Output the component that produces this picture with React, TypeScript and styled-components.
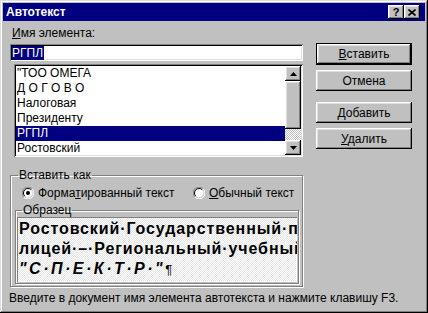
import * as React from 'react'
import styled, { createGlobalStyle } from 'styled-components'

const GlobalStyle = createGlobalStyle`
  html, body {
    margin: 0;
    padding: 0;
    background: #c0c0c0;
  }
  body {
    font-family: "Liberation Sans", Arial, sans-serif;
  }
`

const raised = `inset -1px -1px #000, inset 1px 1px #fff, inset -2px -2px #808080, inset 2px 2px #dfdfdf`
const sunken = `inset 1px 1px #808080, inset -1px -1px #fff, inset 2px 2px #000, inset -2px -2px #dfdfdf`
const dither = `repeating-conic-gradient(#fff 0 25%, #c0c0c0 0 50%) 0 0 / 2px 2px`

const Window = styled.div`
  width: 428px;
  height: 313px;
  box-sizing: border-box;
  padding: 3px;
  background: #c0c0c0;
  box-shadow: inset -1px -1px #000, inset 1px 1px #dfdfdf, inset -2px -2px #808080, inset 2px 2px #fff;
  display: flex;
  flex-direction: column;
  font-size: 12px;
  color: #000;
`

const TitleBar = styled.div`
  height: 18px;
  background: #000080;
  display: flex;
  align-items: center;
  padding: 0 5px 0 3px;
`

const TitleText = styled.div`
  flex: 1;
  color: #fff;
  font-weight: bold;
  font-size: 12px;
`

const TitleButton = styled.div`
  width: 16px;
  height: 14px;
  background: #c0c0c0;
  box-shadow: ${raised};
  display: grid;
  place-items: center;
  font-weight: bold;
  font-size: 11px;
  line-height: 14px;
`

const Main = styled.div`
  display: grid;
  grid-template-columns: 293px 96px;
  column-gap: 13px;
  padding-left: 7px;
`

const LeftCol = styled.div`
  display: flex;
  flex-direction: column;
`

const Label = styled.div`
  margin: 5px 0 4px 2px;
  line-height: 14px;
`

const Key = styled.span`
  text-decoration: underline;
`

const NameField = styled.div`
  height: 17px;
  box-sizing: border-box;
  background: #fff;
  box-shadow: ${sunken};
  padding: 2px 0 0 2px;
  line-height: 14px;
`

const Selected = styled.span`
  background: #000080;
  color: #fff;
  padding: 0 1px 0 0;
`

const List = styled.div`
  margin: 3px 0 0 4px;
  height: 93px;
  box-sizing: border-box;
  padding: 2px;
  box-shadow: ${sunken};
  background: #fff;
  display: flex;
`

const Items = styled.div`
  flex: 1;
  overflow: hidden;
`

const Row = styled.div<{ $active?: boolean }>`
  height: 15px;
  line-height: 15px;
  padding-left: 1px;
  white-space: nowrap;
  background: ${p => (p.$active ? '#000080' : 'transparent')};
  color: ${p => (p.$active ? '#fff' : '#000')};
`

const ScrollBar = styled.div`
  width: 16px;
  display: flex;
  flex-direction: column;
`

const ScrollButton = styled.div`
  height: 15px;
  background: #c0c0c0;
  box-shadow: ${raised};
  display: grid;
  place-items: center;
`

const Thumb = styled.div`
  height: 48px;
  background: #c0c0c0;
  box-shadow: ${raised};
`

const Track = styled.div`
  flex: 1;
  background: ${dither};
`

const Group = styled.fieldset`
  margin: 11px 0 0 0;
  padding: 4px 3px 2px 4px;
  min-inline-size: 0;
  border: 1px solid #808080;
  box-shadow: inset 1px 1px #fff, 1px 1px #fff;
`

const Legend = styled.legend`
  padding: 0 1px;
  margin-left: 3px;
  line-height: 14px;
`

const RadioRow = styled.div`
  display: flex;
  align-items: center;
  height: 14px;
  padding-left: 7px;
`

const RadioOption = styled.label<{ $width?: number }>`
  display: flex;
  align-items: center;
  gap: 4px;
  width: ${p => (p.$width ? `${p.$width}px` : 'auto')};
`

const SampleGroup = styled.fieldset`
  margin: 3px 0 0 0;
  padding: 0 1px 1px 1px;
  min-inline-size: 0;
  border: 1px solid #808080;
  box-shadow: inset 1px 1px #fff, 1px 1px #fff;
`

const SampleLegend = styled.legend`
  padding: 0 1px;
  margin-left: 5px;
  line-height: 14px;
`

const Preview = styled.div`
  height: 65px;
  box-sizing: border-box;
  padding: 2px 0 0 2px;
  box-shadow: inset 1px 1px #808080, inset -1px -1px #fff;
  background: repeating-conic-gradient(#e4e4e4 0 25%, #fff 0 50%) 0 0 / 2px 2px;
  overflow: hidden;
`

const PreviewLine = styled.div<{ $italic?: boolean }>`
  height: 20px;
  line-height: 20px;
  white-space: nowrap;
  font-weight: bold;
  font-size: 16px;
  letter-spacing: ${p => (p.$italic ? 2.5 : 0.9)}px;
  font-style: ${p => (p.$italic ? 'italic' : 'normal')};
`

const Pilcrow = styled.span`
  font-weight: normal;
  font-style: normal;
  font-size: 13px;
  letter-spacing: 0;
`

const RightCol = styled.div`
  display: flex;
  flex-direction: column;
  padding-top: 22px;
`

const Button = styled.div<{ $default?: boolean; $gap?: number }>`
  height: ${p => (p.$default ? 22 : 21)}px;
  box-sizing: border-box;
  margin-top: ${p => p.$gap ?? 0}px;
  background: #c0c0c0;
  border: ${p => (p.$default ? '1px solid #000' : 'none')};
  box-shadow: ${raised};
  display: flex;
  align-items: center;
  justify-content: center;
  font-size: 12px;
`

const Status = styled.div`
  margin: 5px 0 0 6px;
  line-height: 13px;
  white-space: nowrap;
`

const Radio = ({ checked }: { checked?: boolean }) => (
  <svg width="12" height="12" viewBox="0 0 12 12">
    <circle cx="6" cy="6" r="4.5" fill="#fff" />
    <path d="M1.8 10.2A5.5 5.5 0 0 1 10.2 1.8" stroke="#808080" fill="none" />
    <path d="M10.2 1.8A5.5 5.5 0 0 1 1.8 10.2" stroke="#fff" fill="none" />
    <path d="M2.8 9.2A4.5 4.5 0 0 1 9.2 2.8" stroke="#000" fill="none" />
    <path d="M9.2 2.8A4.5 4.5 0 0 1 2.8 9.2" stroke="#dfdfdf" fill="none" />
    {checked && <circle cx="6" cy="6" r="2" fill="#000" />}
  </svg>
)

const Arrow = ({ down }: { down?: boolean }) => (
  <svg width="7" height="4" viewBox="0 0 7 4">
    <path d={down ? 'M0 0h7L3.5 4z' : 'M3.5 0L7 4H0z'} fill="#000" />
  </svg>
)

const items = ['"ТОО ОМЕГА', 'Д О Г О В О', 'Налоговая', 'Президенту', 'РГПЛ', 'Ростовский']

export default function App() {
  return (
    <>
      <GlobalStyle />
      <Window>
        <TitleBar>
          <TitleText>Автотекст</TitleText>
          <TitleButton>?</TitleButton>
          <TitleButton>
            <svg width="8" height="7" viewBox="0 0 8 7">
              <path d="M0.5 0.5L7.5 6.5M7.5 0.5L0.5 6.5" stroke="#000" strokeWidth="1.6" />
            </svg>
          </TitleButton>
        </TitleBar>
        <Main>
          <LeftCol>
            <Label>
              <Key>И</Key>мя элемента:
            </Label>
            <NameField>
              <Selected>РГПЛ</Selected>
            </NameField>
            <List>
              <Items>
                {items.map(item => (
                  <Row key={item} $active={item === 'РГПЛ'}>
                    {item}
                  </Row>
                ))}
              </Items>
              <ScrollBar>
                <ScrollButton>
                  <Arrow />
                </ScrollButton>
                <Thumb />
                <Track />
                <ScrollButton>
                  <Arrow down />
                </ScrollButton>
              </ScrollBar>
            </List>
            <Group>
              <Legend>Вставить как</Legend>
              <RadioRow>
                <RadioOption $width={171}>
                  <Radio checked />
                  <span>
                    Форма<Key>т</Key>ированный текст
                  </span>
                </RadioOption>
                <RadioOption>
                  <Radio />
                  <span>
                    <Key>О</Key>бычный текст
                  </span>
                </RadioOption>
              </RadioRow>
              <SampleGroup>
                <SampleLegend>Образец</SampleLegend>
                <Preview>
                  <PreviewLine>Ростовский·Государственный·п</PreviewLine>
                  <PreviewLine>лицей·–·Региональный·учебный</PreviewLine>
                  <PreviewLine $italic>
                    "С·П·Е·К·Т·Р·"<Pilcrow>¶</Pilcrow>
                  </PreviewLine>
                </Preview>
              </SampleGroup>
            </Group>
          </LeftCol>
          <RightCol>
            <Button $default>
              <span>
                <Key>В</Key>ставить
              </span>
            </Button>
            <Button $gap={5}>Отмена</Button>
            <Button $gap={11}>
              <span>
                <Key>Д</Key>обавить
              </span>
            </Button>
            <Button $gap={5}>
              <span>
                <Key>У</Key>далить
              </span>
            </Button>
          </RightCol>
        </Main>
        <Status>Введите в документ имя элемента автотекста и нажмите клавишу F3.</Status>
      </Window>
    </>
  )
}
